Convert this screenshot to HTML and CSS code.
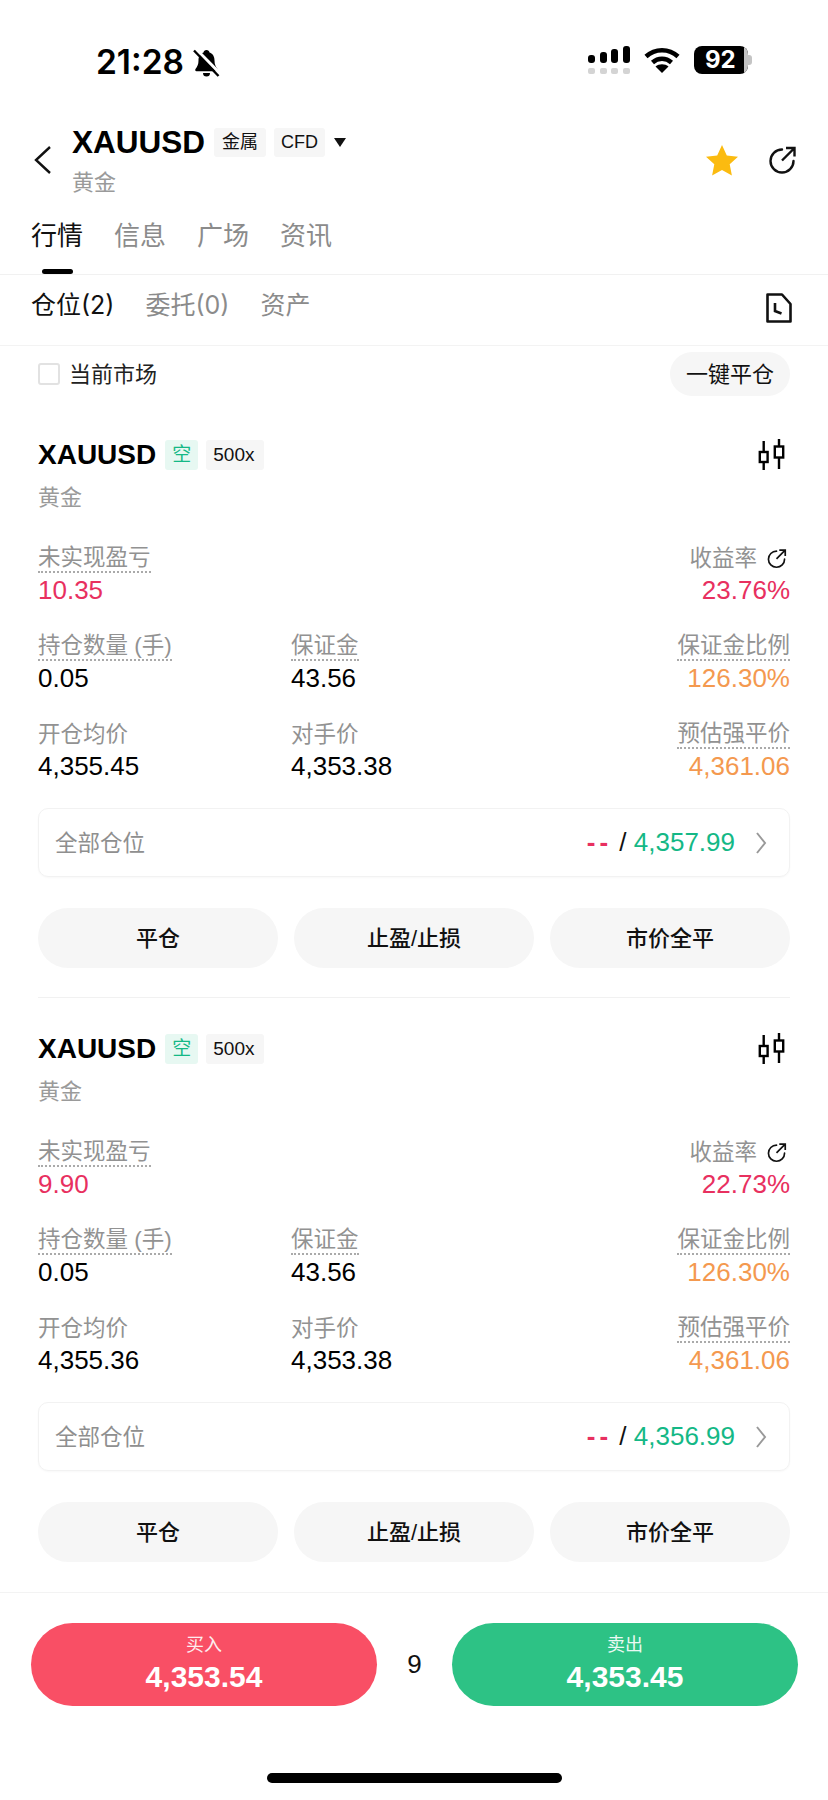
FILE: index.html
```html
<!DOCTYPE html>
<html>
    <head>
        <title>XAUUSD</title>
        <meta charset="utf-8"/>
        <meta name="viewport" content="width=device-width,minimum-scale=1,initial-scale=1" />
        <link rel="stylesheet" href="styles.css">
    </head>
    <body>
        <svg class="defs" width="0" height="0">
            <symbol id="share" viewBox="0 0 30 30">
                <path d="M15 4.5A11.5 11.5 0 1 0 26.5 16" fill="none" stroke="currentColor" stroke-width="2.4" stroke-linecap="round"/>
                <path d="M15 15.5L27 3.5M19 3h8.5v8.5" fill="none" stroke="currentColor" stroke-width="2.4"/>
            </symbol>
            <symbol id="candles" viewBox="0 0 28 32">
                <path d="M5.700 2v10M5.700 24v7M21 0v7M21 19v11" fill="none" stroke="currentColor" stroke-width="2.4"/>
                <rect x="1.800" y="13" width="7.800" height="10" fill="none" stroke="currentColor" stroke-width="2.4"/>
                <rect x="16.800" y="7.500" width="8.400" height="11" fill="none" stroke="currentColor" stroke-width="2.4"/>
            </symbol>
            <symbol id="chevron" viewBox="0 0 12 24">
                <path d="M2 2l8 10-8 10" fill="none" stroke="currentColor" stroke-width="2"/>
            </symbol>
        </svg>

        <header class="status">
            <div class="status-left">
                <span class="clock">21:28</span>
                <svg class="bell" width="27" height="29" viewBox="0 0 27 29">
                    <path d="M13.500 1c-1.700 0-2.800 1.100-3 2.600C7 4.800 5.500 8 5.500 11.500c0 4-1.200 6-3 8.500-.6.900-.2 2.200 1 2.200h20c1.200 0 1.600-1.300 1-2.200-1.800-2.500-3-4.500-3-8.500 0-3.500-1.500-6.700-5-7.900-.2-1.500-1.300-2.600-3-2.600z"/>
                    <path d="M10 24h7a3.500 3.500 0 0 1-7 0z"/>
                    <path d="M3.500 .5L27 24.500" stroke="#fff" stroke-width="3"/>
                    <path d="M1 1.500L25.500 27" stroke="#000" stroke-width="2.400"/>
                </svg>
            </div>
            <div class="status-right">
                <div class="signal">
                    <div class="bars"><i class="b1"></i><i class="b2"></i><i class="b3"></i><i class="b4"></i></div>
                    <div class="bars ghost"><i></i><i></i><i></i><i></i></div>
                </div>
                <svg class="wifi" width="36" height="27" viewBox="0 0 36 27">
                    <path d="M2 9.500C11 1 25 1 34 9.500" fill="none" stroke="#000" stroke-width="4.500"/>
                    <path d="M8.500 15.500C14 10.500 22 10.500 27.500 15.500" fill="none" stroke="#000" stroke-width="4.500"/>
                    <path d="M18 26l-6.500-6.500c3.500-3 9.500-3 13 0z"/>
                </svg>
                <div class="battery">
                    <div class="battery-body"><span>92</span><i></i></div>
                    <div class="battery-cap"></div>
                </div>
            </div>
        </header>

        <section class="title-bar">
            <svg class="back" width="18" height="28" viewBox="0 0 18 28">
                <path d="M16 1L2 14l14 13" fill="none" stroke="#111" stroke-width="2.400"/>
            </svg>
            <div class="title-text">
                <div class="title-line">
                    <h1>XAUUSD</h1>
                    <span class="tag">金属</span>
                    <span class="tag">CFD</span>
                    <span class="caret"></span>
                </div>
                <div class="title-sub">黄金</div>
            </div>
            <svg class="star" width="34" height="32" viewBox="0 0 34 32">
                <path d="M17 1l4.800 10.400 11.200 1.300-8.300 7.600 2.200 11.100L17 26l-9.900 5.400 2.200-11.100L1 12.700l11.200-1.300z" fill="#fbbb10"/>
            </svg>
            <svg class="share-big"><use href="#share"/></svg>
        </section>

        <nav class="tabs">
            <a class="active">行情</a>
            <a>信息</a>
            <a>广场</a>
            <a>资讯</a>
        </nav>

        <nav class="subtabs">
            <a class="active">仓位(2)</a>
            <a>委托(0)</a>
            <a>资产</a>
            <svg class="doc" width="26" height="30" viewBox="0 0 26 30">
                <path d="M1.500 1.500H16l8.500 9.500V28.500H1.500z" fill="none" stroke="#111" stroke-width="2.600" stroke-linejoin="round"/>
                <path d="M9 10v8l6.500 2.500" fill="none" stroke="#111" stroke-width="2.600"/>
            </svg>
        </nav>

        <div class="filter">
            <label class="market"><span class="box"></span><span class="market-name">当前市场</span></label>
            <button class="close-all">一键平仓</button>
        </div>

        <article class="card">
            <div class="card-head">
                <h2>XAUUSD</h2>
                <span class="badge short">空</span>
                <span class="badge">500x</span>
                <svg class="candles"><use href="#candles"/></svg>
            </div>
            <div class="card-sub">黄金</div>
            <div class="stats">
                <div class="stat"><span class="key dotted">未实现盈亏</span><span class="val red">10.35</span></div>
                <div class="stat"></div>
                <div class="stat right"><span class="key">收益率<svg class="share-small"><use href="#share"/></svg></span><span class="val red">23.76%</span></div>
                <div class="stat"><span class="key dotted">持仓数量 (手)</span><span class="val">0.05</span></div>
                <div class="stat"><span class="key dotted">保证金</span><span class="val">43.56</span></div>
                <div class="stat right"><span class="key dotted">保证金比例</span><span class="val orange">126.30%</span></div>
                <div class="stat"><span class="key">开仓均价</span><span class="val">4,355.45</span></div>
                <div class="stat"><span class="key">对手价</span><span class="val">4,353.38</span></div>
                <div class="stat right"><span class="key dotted">预估强平价</span><span class="val orange">4,361.06</span></div>
            </div>
            <div class="all-pos">
                <span class="all-label">全部仓位</span>
                <span class="all-val"><b class="red dash">--</b> / <b class="green">4,357.99</b></span>
                <svg class="chevron"><use href="#chevron"/></svg>
            </div>
            <div class="actions">
                <button>平仓</button>
                <button>止盈/止损</button>
                <button>市价全平</button>
            </div>
        </article>

        <article class="card last">
            <div class="card-head">
                <h2>XAUUSD</h2>
                <span class="badge short">空</span>
                <span class="badge">500x</span>
                <svg class="candles"><use href="#candles"/></svg>
            </div>
            <div class="card-sub">黄金</div>
            <div class="stats">
                <div class="stat"><span class="key dotted">未实现盈亏</span><span class="val red">9.90</span></div>
                <div class="stat"></div>
                <div class="stat right"><span class="key">收益率<svg class="share-small"><use href="#share"/></svg></span><span class="val red">22.73%</span></div>
                <div class="stat"><span class="key dotted">持仓数量 (手)</span><span class="val">0.05</span></div>
                <div class="stat"><span class="key dotted">保证金</span><span class="val">43.56</span></div>
                <div class="stat right"><span class="key dotted">保证金比例</span><span class="val orange">126.30%</span></div>
                <div class="stat"><span class="key">开仓均价</span><span class="val">4,355.36</span></div>
                <div class="stat"><span class="key">对手价</span><span class="val">4,353.38</span></div>
                <div class="stat right"><span class="key dotted">预估强平价</span><span class="val orange">4,361.06</span></div>
            </div>
            <div class="all-pos">
                <span class="all-label">全部仓位</span>
                <span class="all-val"><b class="red dash">--</b> / <b class="green">4,356.99</b></span>
                <svg class="chevron"><use href="#chevron"/></svg>
            </div>
            <div class="actions">
                <button>平仓</button>
                <button>止盈/止损</button>
                <button>市价全平</button>
            </div>
        </article>

        <footer class="trade">
            <button class="buy"><span>买入</span><b>4,353.54</b></button>
            <span class="spread">9</span>
            <button class="sell"><span>卖出</span><b>4,353.45</b></button>
        </footer>
        <div class="home-wrap"><div class="home"></div></div>
    </body>
</html>
```
FILE: styles.css
```css
* {
    box-sizing: border-box;
}
html, body {
    margin: 0;
    padding: 0;
    background: #fff;
    color: #000;
    font-family: "Liberation Sans", "Noto Sans CJK SC", sans-serif;
}
h1, h2 {
    margin: 0;
}
button {
    font-family: inherit;
    border: 0;
    padding: 0;
}
.defs {
    display: block;
    height: 0;
}

/* status bar */
.status {
    height: 128px;
    padding: 45px 76px 0 96px;
    display: flex;
    justify-content: space-between;
    align-items: flex-start;
    font-family: Inter, sans-serif;
}
.status-left {
    display: flex;
    align-items: center;
    gap: 9px;
}
.clock {
    font-size: 33.5px;
    line-height: 34px;
    font-weight: 600;
}
.bell {
    display: block;
    margin-top: 2px;
}
.status-right {
    display: flex;
    gap: 14px;
    margin-top: 1px;
}
.signal {
    width: 42px;
}
.bars {
    display: flex;
    justify-content: space-between;
    align-items: flex-end;
    height: 17px;
}
.bars i {
    width: 7px;
    background: #000;
    border-radius: 3px;
}
.b1 { height: 8px; }
.b2 { height: 11px; }
.b3 { height: 14px; }
.b4 { height: 17px; }
.ghost {
    height: 6px;
    margin-top: 5px;
}
.ghost i {
    height: 6px;
    background: #d4d4d4;
    border-radius: 2px;
}
.wifi {
    display: block;
    margin-top: 1px;
}
.battery {
    display: flex;
    align-items: center;
    height: 28px;
}
.battery-body {
    width: 54px;
    height: 28px;
    background: #000;
    border-radius: 8px;
    color: #fff;
    position: relative;
    overflow: hidden;
    font-size: 24px;
    font-weight: 700;
    line-height: 28px;
    padding-left: 11px;
}
.battery-body i {
    position: absolute;
    right: 0;
    top: 0;
    bottom: 0;
    width: 4px;
    background: #c4c4c4;
}
.battery-cap {
    width: 4px;
    height: 10px;
    background: #c4c4c4;
    border-radius: 0 3px 3px 0;
}

/* title */
.title-bar {
    height: 72px;
    padding: 0 31px 0 34px;
    display: flex;
    align-items: flex-start;
}
.back {
    margin-top: 18px;
    display: block;
}
.title-text {
    margin-left: 20px;
    flex: 1;
}
.title-line {
    display: flex;
    align-items: center;
    height: 29px;
}
h1 {
    font-size: 31.5px;
    font-weight: 700;
    line-height: 29px;
}
.tag {
    height: 29px;
    line-height: 29px;
    padding: 0 7px;
    margin-left: 8px;
    background: #f6f6f6;
    border-radius: 3px;
    font-size: 18px;
    color: #111;
}
.title-line .tag:first-of-type {
    margin-left: 9px;
    padding: 0 8px;
}
.caret {
    margin-left: 9px;
    border-left: 6.500px solid transparent;
    border-right: 6.500px solid transparent;
    border-top: 9px solid #111;
}
.title-sub {
    margin-top: 14px;
    font-size: 22px;
    line-height: 24px;
    color: #9a9a9a;
}
.star {
    margin-top: 16px;
    display: block;
}
.share-big {
    width: 30px;
    height: 30px;
    margin: 17px 0 0 28px;
    color: #111;
}

/* tabs */
.tabs {
    height: 75px;
    padding: 19px 0 0 31px;
    display: flex;
    gap: 31px;
    border-bottom: 1px solid #f1f1f1;
}
.tabs a {
    font-size: 26px;
    line-height: 34px;
    color: #8b8b8b;
    position: relative;
}
.tabs a.active {
    color: #111;
}
.tabs a.active::after {
    content: "";
    position: absolute;
    left: 11px;
    right: 10px;
    bottom: 0;
    height: 5px;
    background: #000;
    border-radius: 3px;
}
.subtabs {
    height: 71px;
    padding: 13px 31px 0 31px;
    display: flex;
    gap: 31px;
    border-bottom: 1px solid #f3f3f3;
    font-family: Inter, "Noto Sans CJK SC", sans-serif;
}
.subtabs a {
    font-size: 25px;
    line-height: 34px;
    color: #8b8b8b;
}
.subtabs a.active {
    color: #111;
}
.doc {
    margin-left: auto;
    margin-top: 5px;
    margin-right: 5px;
    display: block;
}

/* filter row */
.filter {
    height: 56px;
    padding: 6px 38px 0;
    display: flex;
    justify-content: space-between;
    align-items: flex-start;
}
.market {
    display: flex;
    align-items: center;
    height: 44px;
    font-size: 22px;
    color: #222;
    gap: 9px;
}
.market-name {
    padding-bottom: 4px;
}
.box {
    width: 22px;
    height: 22px;
    border: 2px solid #e2e2e2;
    border-radius: 3px;
}
.close-all {
    height: 44px;
    width: 120px;
    border-radius: 22px;
    background: #f6f6f6;
    color: #111;
    font-size: 22px;
    padding-bottom: 4px;
}

/* position card */
.card {
    margin: 0 38px;
    padding-top: 38px;
    height: 596px;
    border-bottom: 1px solid #f1f1f1;
}
.card + .card {
    padding-top: 36px;
    height: 595px;
}
.card.last {
    border-bottom: 0;
}
.card-head {
    display: flex;
    align-items: center;
    height: 30px;
}
h2 {
    font-size: 28px;
    line-height: 30px;
    font-weight: 700;
}
.badge {
    height: 30px;
    line-height: 30px;
    padding: 0 10px 0 7px;
    margin-left: 8px;
    background: #f6f6f6;
    border-radius: 3px;
    font-size: 19px;
    color: #111;
}
.badge.short {
    padding: 0 7px;
    background: #e7f8f2;
    color: #14b886;
    margin-left: 9px;
}
.candles {
    width: 28px;
    height: 32px;
    margin-left: auto;
    margin-right: 4px;
    color: #000;
}
.card-sub {
    margin-top: 15px;
    font-size: 22px;
    line-height: 26px;
    color: #9a9a9a;
}
.stats {
    margin-top: 33px;
    display: grid;
    grid-template-columns: 253px 1fr auto;
    row-gap: 23px;
}
.stat {
    display: flex;
    flex-direction: column;
    align-items: flex-start;
    height: 65px;
}
.stat.right {
    align-items: flex-end;
}
.key {
    font-size: 22.5px;
    line-height: 27px;
    height: 29px;
    color: #929292;
    display: flex;
    align-items: center;
}
.dotted {
    border-bottom: 2px dotted #aaa;
}
.val {
    margin-top: 2px;
    font-size: 26px;
    line-height: 30px;
    color: #000;
}
.share-small {
    width: 21px;
    height: 21px;
    margin: 0 3px 0 9px;
    color: #111;
}
.red {
    color: #e8305f;
}
.orange {
    color: #f4994f;
}
.green {
    color: #14b886;
}
.all-pos {
    margin-top: 23px;
    height: 69px;
    border: 1px solid #f2f2f2;
    border-radius: 10px;
    padding: 0 22px 0 16px;
    display: flex;
    align-items: center;
    box-shadow: 0 1px 2px rgba(0, 0, 0, 0.03);
}
.all-label {
    font-size: 22.5px;
    color: #8f8f8f;
    flex: 1;
    padding-bottom: 4px;
}
.all-val {
    font-size: 26px;
    color: #111;
}
.all-val b {
    font-weight: 400;
}
.all-val .dash {
    font-weight: 700;
    letter-spacing: 4px;
}
.chevron {
    width: 12px;
    height: 24px;
    margin-left: 20px;
    color: #999;
}
.actions {
    margin-top: 31px;
    display: grid;
    grid-template-columns: 240px 240px 240px;
    gap: 16px;
}
.actions button {
    height: 60px;
    border-radius: 30px;
    background: #f6f6f6;
    color: #111;
    font-size: 22px;
    font-weight: 500;
    padding-bottom: 4px;
}

/* trade bar */
.trade {
    margin-top: -1px;
    height: 182px;
    padding: 30px 30px 0 31px;
    border-top: 1px solid #f3f3f3;
    display: flex;
    align-items: flex-start;
    justify-content: space-between;
}
.trade button {
    width: 346px;
    height: 83px;
    border-radius: 42px;
    color: #fff;
    display: flex;
    flex-direction: column;
    align-items: center;
    padding-top: 10px;
}
.trade span {
    font-size: 18px;
    line-height: 24px;
    opacity: 0.9;
}
.trade b {
    font-size: 30px;
    line-height: 34px;
    font-weight: 700;
    margin-top: 3px;
}
.buy {
    background: #f94f65;
}
.sell {
    background: #2dc285;
}
.trade .spread {
    font-size: 26px;
    line-height: 30px;
    margin-top: 26px;
    color: #111;
    opacity: 1;
}
.home-wrap {
    display: flex;
    justify-content: center;
}
.home {
    margin-top: -1px;
    width: 295px;
    height: 10px;
    background: #000;
    border-radius: 5px;
}
```
